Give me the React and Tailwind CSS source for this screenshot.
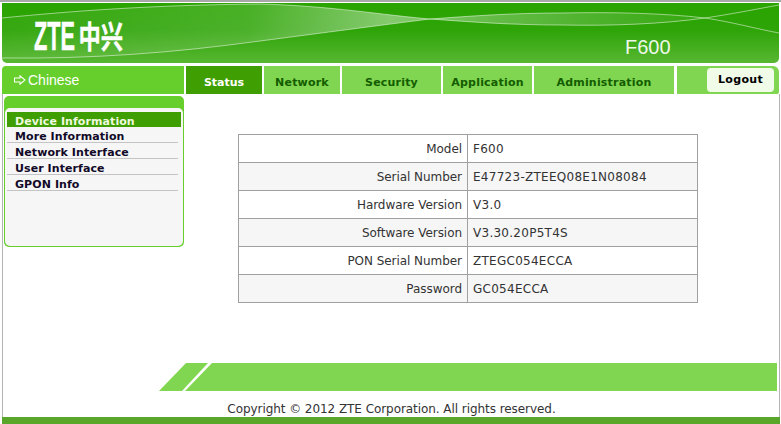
const FONT = "font-['DejaVu_Sans','Verdana',sans-serif]";
const tabs = [
  ["Network", "w-[76px]"],
  ["Security", "w-[99px]"],
  ["Application", "w-[89px]"],
  ["Administration", "w-[140px]"],
];
const rows = [
  ["Model", "F600"],
  ["Serial Number", "E47723-ZTEEQ08E1N08084"],
  ["Hardware Version", "V3.0"],
  ["Software Version", "V3.30.20P5T4S"],
  ["PON Serial Number", "ZTEGC054ECCA"],
  ["Password", "GC054ECCA"],
];
const menu = ["More Information", "Network Interface", "User Interface", "GPON Info"];

const UP = "M0 15 C70 8 150 2 258 1 C330 3 380 12 428 16 C470 13 510 10 560 10 C610 9 660 10 703 15 C730 19 755 26 777 30";
const LOW = "M0 55 C90 56 170 50 258 38 C320 30 380 22 428 16 C470 19 510 22 560 22 C610 23 660 21 703 15 C730 11 755 6 777 2";

function Banner() {
  return (
    <svg className="absolute inset-0" width="777" height="60" viewBox="0 0 777 60">
      <defs>
        <linearGradient id="b" x1="0" y1="0" x2="0" y2="1">
          <stop offset="0" stopColor="#2aa400" />
          <stop offset="0.45" stopColor="#2ea408" />
          <stop offset="1" stopColor="#58b732" />
        </linearGradient>
        <linearGradient id="w" x1="0" y1="0" x2="1" y2="0">
          <stop offset="0" stopColor="#fff" stopOpacity="0.04" />
          <stop offset="0.35" stopColor="#fff" stopOpacity="0.14" />
          <stop offset="0.55" stopColor="#fff" stopOpacity="0.42" />
          <stop offset="0.7" stopColor="#fff" stopOpacity="0.26" />
          <stop offset="1" stopColor="#fff" stopOpacity="0.04" />
        </linearGradient>
      </defs>
      <rect width="777" height="60" fill="url(#b)" />
      <path d="M0 15 C70 8 150 2 258 1 C330 3 380 12 428 16 C470 13 510 10 560 10 C610 9 660 10 703 15 C660 21 610 23 560 22 C510 22 470 19 428 16 C380 22 320 30 258 38 C170 50 90 56 0 55 Z" fill="url(#w)" />
      <path d={UP} fill="none" stroke="#fff" strokeOpacity="0.5" />
      <path d={LOW} fill="none" stroke="#fff" strokeOpacity="0.5" />
    </svg>
  );
}

export default function App() {
  return (
    <div className={`w-[781px] h-[424px] overflow-hidden flex flex-col bg-white ${FONT}`}>
      <div className="h-[2px] shrink-0 bg-[#a8a8a8]" />
      <div className="flex-1 flex flex-col min-h-0 ml-[2px] mr-px">
        <div className="relative h-[60px] mt-px mr-px shrink-0 rounded-b-[5px] overflow-hidden">
          <Banner />
          <svg className="absolute left-[28px] top-0" width="110" height="60" viewBox="0 0 110 60">
            <text x="4" y="47" fill="#fff" stroke="#fff" strokeWidth="0.6" fontFamily="Liberation Sans" fontWeight="700" fontSize="41" textLength="41" lengthAdjust="spacingAndGlyphs">ZTE</text>
            <text transform="translate(48.5 44.5) scale(0.86 1.2)" fill="#fff" stroke="#fff" strokeWidth="0.3" fontFamily="Noto Sans CJK SC" fontWeight="700" fontSize="26">中兴</text>
          </svg>
          <span className="absolute left-[623px] top-[33px] text-[20px] leading-[23px] text-[#eef8ea] font-['Liberation_Sans',sans-serif]">F600</span>
        </div>
        <div className="flex h-[28px] mt-[3px] mr-px shrink-0 gap-[2px]">
          <div className="w-[182px] rounded-tl-[4px] bg-[#66cf2b] flex items-center text-white text-[14px] font-['Liberation_Sans',sans-serif]">
            <svg className="ml-3 mr-[2px] shrink-0" width="12" height="10" viewBox="0 0 12 10">
              <path d="M0.5 3 H6 V0.8 L11 5 L6 9.2 V7 H0.5 Z" fill="none" stroke="#fff" strokeWidth="1.1" />
            </svg>
            Chinese
          </div>
          <div className="w-[76px] bg-[#3f9f02] flex items-center justify-center pt-[7px] text-[11px] font-bold text-white">Status</div>
          {tabs.map(([t, w]) => (
            <div key={t} className={`${w} bg-[#80d650] flex items-center justify-center pt-[7px] text-[11px] font-bold tracking-[0.2px] text-[#145c00]`}>{t}</div>
          ))}
          <div className="flex-1 ml-px rounded-tr-[6px] rounded-br-[2px] bg-[#80d650] flex items-center justify-end pr-[5px]">
            <div className="w-[67px] h-[24px] rounded-[4px] bg-[#f0fbe8] flex items-center justify-center text-[11px] font-bold tracking-[0.3px] text-black">Logout</div>
          </div>
        </div>
        <div className="flex-1 min-h-0 flex flex-col border-x border-x-[#b4b4b4]">
          <div className="flex flex-1 min-h-0 pt-[2px]">
            <div className="w-[180px] h-[151px] ml-px shrink-0 rounded-[5px] bg-[#66cf2b] px-px pb-px pt-[12px]">
              <div className="h-full rounded-[5px] bg-[#f6f6f6] pt-[4px] px-[2px]">
                <div className="h-[15px] w-[174px] bg-[#3f9f02] pl-[8px] pt-[2px] text-[11px] leading-[15px] font-bold tracking-[0.08px] text-[#eefadf]">Device Information</div>
                {menu.map((m) => (
                  <div key={m} className="h-[16px] w-[171px] border-b border-b-[#c4c4c4] pl-[8px] pt-[2px] text-[11px] leading-[15px] font-bold tracking-[0.08px] text-[#120a28]">{m}</div>
                ))}
              </div>
            </div>
            <div className="flex-1 pl-[54px]">
              <table className="mt-[38px] w-[460px] border-collapse text-[12px] text-[#333]">
                <tbody>
                  {rows.map(([k, v], i) => (
                    <tr key={k} className={`h-[28px] ${i % 2 ? "bg-[#f6f6f6]" : "bg-white"}`}>
                      <td className="w-[229px] border border-[#a0a0a0] pr-[5px] text-right tracking-[-0.05px]">{k}</td>
                      <td className="border border-[#a0a0a0] pl-[5px] tracking-[0.27px]">{v}</td>
                    </tr>
                  ))}
                </tbody>
              </table>
            </div>
          </div>
          <div className="flex shrink-0 h-[28px] ml-[156px] mr-[2px]">
            <div className="w-[49px] bg-[#80d650] [clip-path:polygon(27px_0,100%_0,23px_100%,0_100%)]" />
            <div className="flex-1 -ml-[23px] bg-[#80d650] [clip-path:polygon(27px_0,100%_0,100%_100%,0_100%)]" />
          </div>
          <div className="h-[26px] shrink-0 flex items-center justify-center pt-[9px] pl-[1px] text-[12px] tracking-[-0.06px] text-[#333]">Copyright © 2012 ZTE Corporation. All rights reserved.</div>
        </div>
      </div>
      <div className="h-[7px] ml-[2px] mr-px shrink-0 bg-[#5aa62b]" />
    </div>
  );
}
